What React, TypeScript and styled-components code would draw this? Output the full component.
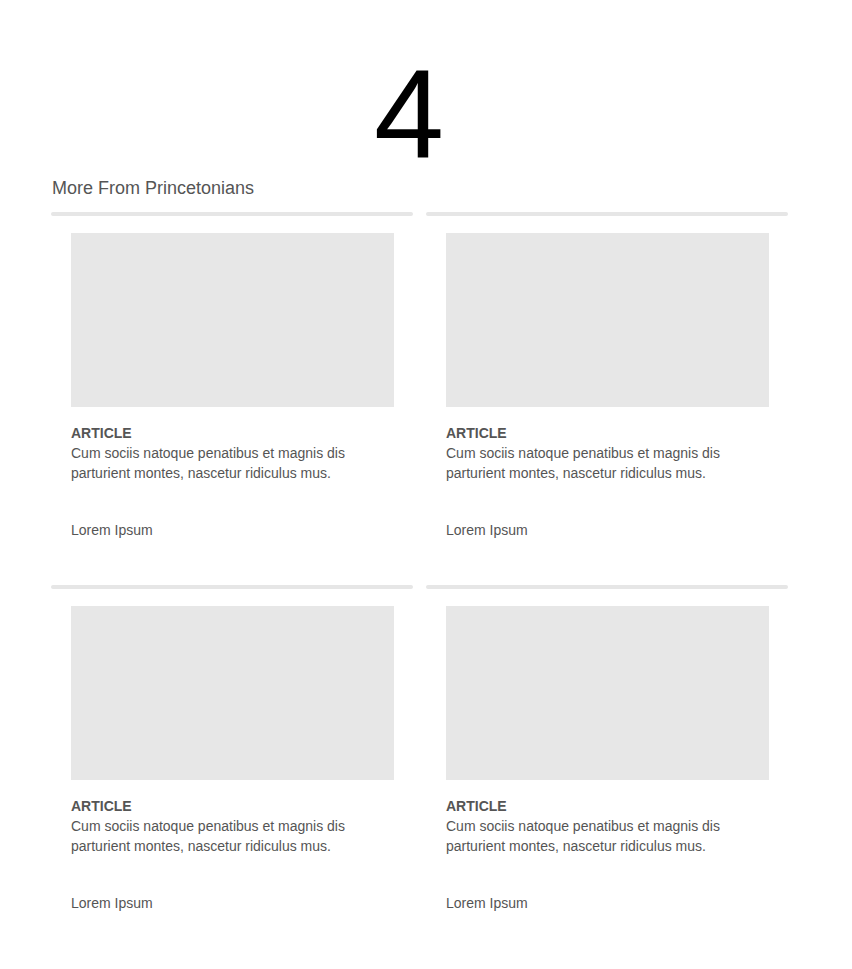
import React from 'react';
import styled, { createGlobalStyle } from 'styled-components';

const GlobalStyle = createGlobalStyle`
  body {
    margin: 0;
    background: #ffffff;
    font-family: "Liberation Sans", Arial, Helvetica, sans-serif;
  }
`;

const Page = styled.div`
  width: 737px;
  padding: 52px 0 40px 51px;
`;

const BigNumber = styled.div`
  font-size: 126px;
  line-height: 1;
  color: #000;
  padding-left: 323px;
`;

const Heading = styled.h2`
  margin: 0 0 14px 1px;
  font-size: 18px;
  line-height: 20px;
  font-weight: 400;
  color: #555;
`;

const Grid = styled.div`
  display: grid;
  grid-template-columns: 362px 362px;
  column-gap: 13px;
`;

const Card = styled.article`
  display: flex;
  flex-direction: column;
`;

const Bar = styled.div`
  height: 4px;
  border-radius: 2px;
  background: #e6e6e6;
`;

const CardBody = styled.div`
  padding: 17px 19px 45px 20px;
`;

const Thumb = styled.div`
  height: 174px;
  background: #e7e7e7;
`;

const Kicker = styled.div`
  margin-top: 16px;
  font-size: 14px;
  line-height: 20px;
  font-weight: 700;
  color: #555;
`;

const Summary = styled.p`
  margin: 0;
  font-size: 14px;
  line-height: 20px;
  color: #555;
`;

const Byline = styled.div`
  margin-top: 37px;
  font-size: 14px;
  line-height: 20px;
  color: #555;
`;

const articles = [1, 2, 3, 4];

const App: React.FC = () => {
  return (
    <Page>
      <GlobalStyle />
      <BigNumber>4</BigNumber>
      <Heading>More From Princetonians</Heading>
      <Grid>
        {articles.map((id) => (
          <Card key={id}>
            <Bar />
            <CardBody>
              <Thumb />
              <Kicker>ARTICLE</Kicker>
              <Summary>
                Cum sociis natoque penatibus et magnis dis parturient montes, nascetur ridiculus mus.
              </Summary>
              <Byline>Lorem Ipsum</Byline>
            </CardBody>
          </Card>
        ))}
      </Grid>
    </Page>
  );
};

export default App;
